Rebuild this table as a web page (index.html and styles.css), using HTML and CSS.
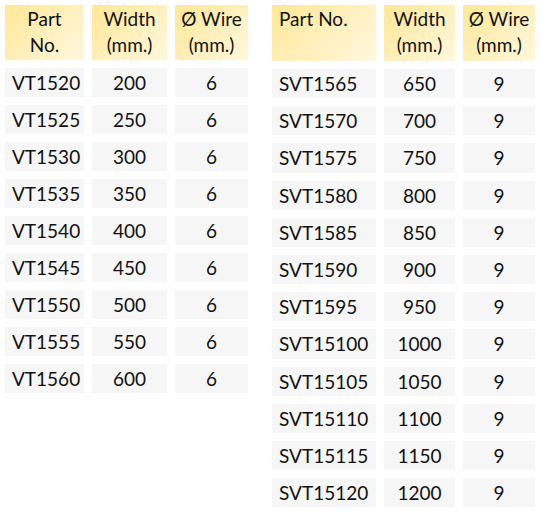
FILE: index.html
```html
<!DOCTYPE html>
<html>
<head>
<meta charset="utf-8">
<link rel="stylesheet" href="styles.css">
</head>
<body>
<div class="page">
  <div class="table table-left">
    <div class="cell head">Part<br>No.</div>
    <div class="cell head">Width<br>(mm.)</div>
    <div class="cell head">Ø Wire<br>(mm.)</div>
    <div class="cell code">VT1520</div><div class="cell">200</div><div class="cell">6</div>
    <div class="cell code">VT1525</div><div class="cell">250</div><div class="cell">6</div>
    <div class="cell code">VT1530</div><div class="cell">300</div><div class="cell">6</div>
    <div class="cell code">VT1535</div><div class="cell">350</div><div class="cell">6</div>
    <div class="cell code">VT1540</div><div class="cell">400</div><div class="cell">6</div>
    <div class="cell code">VT1545</div><div class="cell">450</div><div class="cell">6</div>
    <div class="cell code">VT1550</div><div class="cell">500</div><div class="cell">6</div>
    <div class="cell code">VT1555</div><div class="cell">550</div><div class="cell">6</div>
    <div class="cell code">VT1560</div><div class="cell">600</div><div class="cell">6</div>
  </div>
  <div class="table table-right">
    <div class="cell head head-left">Part No.</div>
    <div class="cell head">Width<br>(mm.)</div>
    <div class="cell head">Ø Wire<br>(mm.)</div>
    <div class="cell code">SVT1565</div><div class="cell">650</div><div class="cell">9</div>
    <div class="cell code">SVT1570</div><div class="cell">700</div><div class="cell">9</div>
    <div class="cell code">SVT1575</div><div class="cell">750</div><div class="cell">9</div>
    <div class="cell code">SVT1580</div><div class="cell">800</div><div class="cell">9</div>
    <div class="cell code">SVT1585</div><div class="cell">850</div><div class="cell">9</div>
    <div class="cell code">SVT1590</div><div class="cell">900</div><div class="cell">9</div>
    <div class="cell code">SVT1595</div><div class="cell">950</div><div class="cell">9</div>
    <div class="cell code">SVT15100</div><div class="cell">1000</div><div class="cell">9</div>
    <div class="cell code">SVT15105</div><div class="cell">1050</div><div class="cell">9</div>
    <div class="cell code">SVT15110</div><div class="cell">1100</div><div class="cell">9</div>
    <div class="cell code">SVT15115</div><div class="cell">1150</div><div class="cell">9</div>
    <div class="cell code">SVT15120</div><div class="cell">1200</div><div class="cell">9</div>
  </div>
</div>
</body>
</html>
```
FILE: styles.css
```css
html, body {
  margin: 0;
  padding: 0;
  background: #ffffff;
}
.page {
  display: flex;
  align-items: flex-start;
  gap: 24px;
  padding: 5px 0 0 5px;
  font-family: Lato, "Open Sans", sans-serif;
  font-size: 19px;
  color: #111111;
}
.table {
  display: grid;
  column-gap: 8px;
  row-gap: 8px;
  grid-auto-rows: 29px;
}
.table-left {
  grid-template-columns: 79px 75px 73px;
  grid-template-rows: 55px;
}
.table-right {
  grid-template-columns: 104px 71px 72px;
  grid-template-rows: 56px;
  grid-auto-rows: 29.2px;
}
.cell {
  background: #f6f6f6;
  display: flex;
  align-items: center;
  justify-content: center;
  line-height: 29px;
}
.cell.code {
  justify-content: flex-start;
  padding-left: 7px;
}
.head {
  background: linear-gradient(135deg, #ffe895 0%, #fff0bf 55%, #fff8dc 100%);
  line-height: 26px;
  text-align: center;
  align-items: flex-start;
  padding-top: 1px;
}
.head.head-left {
  justify-content: flex-start;
  text-align: left;
  padding-left: 7px;
}
```
